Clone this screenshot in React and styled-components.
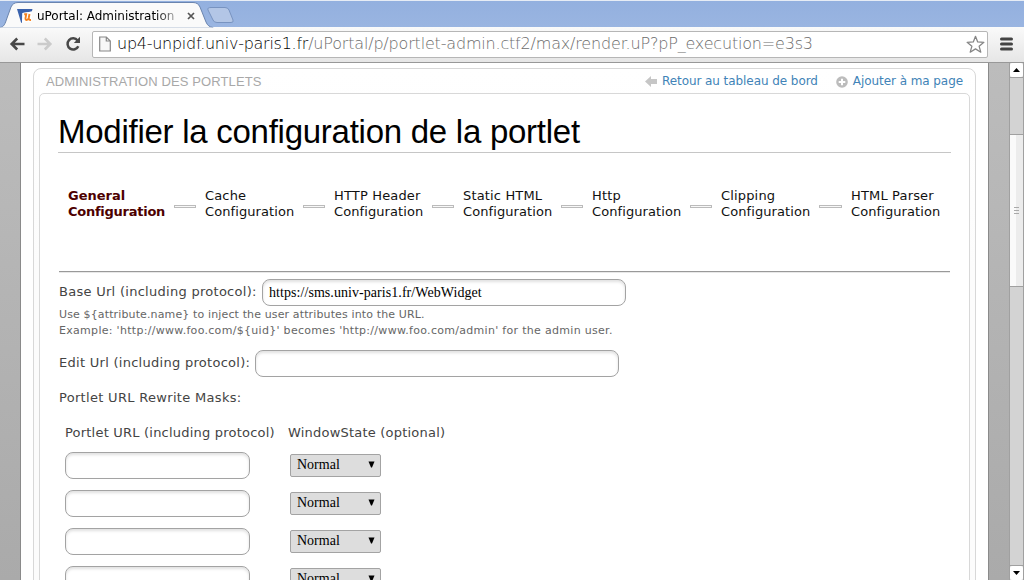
import React from "react";
import styled, { createGlobalStyle } from "styled-components";

const GlobalStyle = createGlobalStyle`
  * { box-sizing: border-box; }
  html, body { margin: 0; padding: 0; overflow: hidden; }
  body { font-family: "DejaVu Sans", sans-serif; font-size: 13px; color: #444; background: #fff; }
`;

const Window = styled.div`
  width: 1024px;
  height: 580px;
  display: flex;
  flex-direction: column;
  overflow: hidden;
`;

const TabStrip = styled.div`
  height: 27px;
  flex: none;
  position: relative;
  background: linear-gradient(#93b0df, #9ab5e1);
  border-top: 1px solid #e6ecf5;
`;

const TabShapes = styled.svg`
  position: absolute;
  left: 0;
  top: -1px;
`;

const TabContent = styled.div`
  position: relative;
  display: flex;
  align-items: center;
  height: 28px;
  padding: 1px 0 0 17px;
  width: 200px;
`;

const TabTitle = styled.span`
  width: 139px;
  margin-left: 4px;
  font-size: 12px;
  line-height: 16px;
  letter-spacing: -0.02px;
  white-space: nowrap;
  overflow: hidden;
  background: linear-gradient(to right, #000 118px, #00000055 138px);
  background-clip: text;
  -webkit-background-clip: text;
  color: transparent;
`;

const CloseIcon = styled.svg`
  margin-left: 11px;
`;

const Toolbar = styled.div`
  height: 36px;
  flex: none;
  display: flex;
  align-items: center;
  padding: 0 9px 1px 9px;
  background: linear-gradient(#fafafa, #e6e6e6);
  border-bottom: 1px solid #989898;
`;

const NavButtons = styled.div`
  display: flex;
  width: 83px;
  gap: 12px;
`;

const AddressBar = styled.div`
  width: 896px;
  height: 27px;
  display: flex;
  align-items: center;
  padding: 0 2px 0 6px;
  background: #fff;
  border: 1px solid #b6b6b6;
  border-radius: 2px;
`;

const Url = styled.span`
  flex: 1;
  margin-left: 6px;
  font-family: "DejaVu Sans", sans-serif;
  font-weight: 200;
  font-size: 16px;
  line-height: 22px;
  letter-spacing: -0.18px;
  white-space: nowrap;
  color: #6c6c6c;
  b { font-weight: 200; color: #000; letter-spacing: -0.26px; }
`;

const MenuIcon = styled.svg`
  margin-left: 12px;
`;

const Viewport = styled.div`
  flex: 1;
  min-height: 0;
  display: flex;
  background: linear-gradient(#bcbcbc, #aaa);
`;

const Page = styled.div`
  width: 969px;
  margin-left: 20px;
  margin-right: 20px;
  flex: none;
  padding: 5px 12px 0;
  background: #fff;
  border: solid #8a8a8a;
  border-width: 0 1px;
`;

const Portlet = styled.section`
  height: 600px;
  padding: 0 5px;
  border: 1px solid #d8d8d8;
  border-radius: 8px;
  background: linear-gradient(#fff, #fcfcfc 200px);
`;

const PortletHeader = styled.header`
  height: 24px;
  display: flex;
  align-items: center;
  padding: 0 7px 0 7px;
`;

const PortletTitle = styled.div`
  flex: 1;
  font-family: "Liberation Sans", sans-serif;
  font-size: 13px;
  letter-spacing: 0.11px;
  color: #a8a8a8;
  white-space: nowrap;
`;

const HeaderLink = styled.a`
  display: flex;
  align-items: center;
  margin-left: 18px;
  gap: 4px;
  font-size: 12px;
  line-height: 16px;
  letter-spacing: -0.07px;
  color: #4183b7;
  white-space: nowrap;
`;

const Content = styled.div`
  height: 600px;
  padding: 0 18px;
  background: #fff;
  border: 1px solid #d8d8d8;
  border-radius: 5px;
`;

const Heading = styled.h1`
  margin: 0;
  height: 59px;
  padding-top: 18px;
  border-bottom: 1px solid #c6c6c6;
  font-family: "Liberation Sans", sans-serif;
  font-size: 33px;
  line-height: 40px;
  letter-spacing: -0.26px;
  font-weight: 400;
  color: #000;
  white-space: nowrap;
`;

const Steps = styled.ol`
  margin: 0;
  padding: 35px 0 0 10px;
  height: 118px;
  display: flex;
  list-style: none;
`;

const Step = styled.li`
  width: ${(p) => p.$width}px;
  flex: none;
  display: flex;
  justify-content: space-between;
  line-height: 16px;
  letter-spacing: ${(p) => (p.$active ? -0.26 : 0.09)}px;
  color: ${(p) => (p.$active ? "#4d0000" : "#111")};
  font-weight: ${(p) => (p.$active ? 700 : 400)};
  white-space: nowrap;
`;

const StepName = styled.span`
  letter-spacing: ${(p) => (p.$active ? 0 : 0.16)}px;
`;

const Dash = styled.i`
  width: ${(p) => p.$width}px;
  height: 3px;
  margin: 17px 9px 0 0;
  border: 1px solid #bbb;
  background: #f8f8f8;
`;

const Form = styled.form`
  margin: 0 1px;
  border-top: 1px solid #999;
  box-shadow: inset 0 1px #e8e8e8;
  padding-top: 7px;
  letter-spacing: 0.28px;
`;

const Field = styled.label`
  display: flex;
  align-items: center;
  gap: 5px;
  height: 27px;
  white-space: nowrap;
`;

const FieldName = styled.span`
  width: ${(p) => p.$width}px;
  flex: none;
  padding-bottom: 2px;
`;

const TextInput = styled.input`
  width: ${(p) => p.$width}px;
  height: 27px;
  margin: 0;
  padding: 0 6px;
  border: 1px solid #a3a3a3;
  border-radius: 8px;
  background: #fff;
  box-shadow: inset 0 2px 3px #0000001f;
  font-family: "Liberation Serif", serif;
  font-size: 14px;
  letter-spacing: 0.06px;
  color: #000;
  outline: none;
`;

const Hint = styled.p`
  margin: ${(p) => p.$margin};
  font-size: 11px;
  line-height: 16px;
  letter-spacing: ${(p) => p.$spacing}px;
  color: #666;
  white-space: nowrap;
`;

const Label = styled.div`
  line-height: 16px;
  margin-top: 13px;
  letter-spacing: 0.31px;
  white-space: nowrap;
`;

const MaskTable = styled.div`
  display: grid;
  grid-template-columns: 225px 200px;
  grid-template-rows: 27px;
  grid-auto-rows: 38px;
  padding: 19px 0 0 6px;
`;

const ColumnTitle = styled.div`
  line-height: 16px;
  letter-spacing: 0.21px;
  white-space: nowrap;
  margin-left: ${(p) => p.$shift || 0}px;
`;

const SelectBox = styled.div`
  width: 91px;
  height: 23px;
  margin-top: 2px;
  padding: 0 5px 2px 6px;
  display: flex;
  align-items: center;
  justify-content: space-between;
  border: 1px solid #a3a3a3;
  border-radius: 2px;
  background: #ddd;
  font-family: "Liberation Serif", serif;
  font-size: 14px;
  letter-spacing: 0;
  color: #000;
`;

const Scrollbar = styled.div`
  width: 15px;
  flex: none;
  display: flex;
  flex-direction: column;
  background: #d3d3d3;
  border: solid #a0a0a0;
  border-width: 0 1px;
`;

const ScrollButton = styled.div`
  height: 14px;
  display: flex;
  align-items: center;
  justify-content: center;
  background: #fff;
  border-radius: 2px;
`;

const Track = styled.div`
  height: ${(p) => p.$height}px;
  border: solid #a0a0a0;
  border-width: 1px 0;
`;

const Thumb = styled.div`
  height: 151px;
  display: flex;
  flex-direction: column;
  align-items: center;
  justify-content: center;
  gap: 2px;
  background: linear-gradient(to right, #fafafa 50%, #ececec 50%);
`;

const Grip = styled.i`
  width: 5px;
  height: 1px;
  background: #aaa;
`;

const Favicon = () => (
  <svg width="16" height="16" viewBox="0 0 16 16">
    <path d="M0 1h15.500L14.800 3.500 5.500 5 5 14.500 4.200 15z" fill="#3a62ad" />
    <path d="M5.500 5 15.500 3.500 14.500 14 5 14.500z" fill="#fff" />
    <path d="M7.200 6.200H9.200L8.500 10.200Q8.300 12 9.700 12 11.200 12 11.700 10L12.500 6M11.800 9.500Q11.400 12.200 14 12" fill="none" stroke="#f5821f" strokeWidth="1.900" />
  </svg>
);

const BackIcon = ({ color }) => (
  <svg width="16" height="16" viewBox="0 0 16 16" fill="none" stroke={color} strokeWidth="2.600">
    <path d="M15.500 8H3M8.200 2.500 2.700 8 8.200 13.500" />
  </svg>
);

const ForwardIcon = ({ color }) => (
  <svg width="16" height="16" viewBox="0 0 16 16" fill="none" stroke={color} strokeWidth="2.600">
    <path d="M.5 8H13M7.800 2.500 13.300 8 7.800 13.500" />
  </svg>
);

const ReloadIcon = () => (
  <svg width="16" height="16" viewBox="0 0 16 16">
    <path d="M12.600 4.500A5.600 5.600 0 1 0 13.300 10.200" fill="none" stroke="#484848" strokeWidth="2.500" />
    <path d="M15 .8V7H8.800z" fill="#484848" />
  </svg>
);

const PageIcon = () => (
  <svg width="12" height="16" viewBox="0 0 12 16">
    <path d="M.7 1h6.600l4 4v10H.7zM7.300 1v4h4" fill="#f7f7f7" stroke="#888" strokeWidth="1.200" />
  </svg>
);

const StarIcon = () => (
  <svg width="19" height="19" viewBox="0 0 19 19">
    <path d="M9.500 1.300 11.700 6.900 17.900 7.300 13.100 11.200 14.800 17.200 9.500 13.900 4.200 17.200 5.900 11.200 1.100 7.300 7.300 6.900z" fill="#fff" stroke="#858585" strokeWidth="1.250" strokeLinejoin="round" />
  </svg>
);

const Arrow = ({ d }) => (
  <svg width="7" height="4" viewBox="0 0 7 4">
    <path d={d} fill="#000" />
  </svg>
);

const steps = [
  ["General", 137],
  ["Cache", 129],
  ["HTTP Header", 129],
  ["Static HTML", 129],
  ["Http", 129],
  ["Clipping", 130],
  ["HTML Parser", 90],
];

export default function App() {
  return (
    <Window>
      <GlobalStyle />
      <TabStrip>
        <TabShapes width="260" height="28" viewBox="0 0 260 28">
          <path d="M0 27.500C4 27 5 24 7 18L11 7Q13 2.500 18 2.500H193Q198 2.500 200 7L206 22Q208 27 213 27.500V28H0z" fill="#fafafa" stroke="#6a84ae" />
          <path d="M0 28h1024" stroke="#fafafa" />
          <path d="M211 7.500H225Q228 7.500 229 10L233 20Q234 22.500 231 22.500H217Q214 22.500 213 20L208 10Q207 7.500 211 7.500z" fill="#b3c6e6" stroke="#7893c0" />
        </TabShapes>
        <TabContent>
          <Favicon />
          <TabTitle>uPortal: Administration</TabTitle>
          <CloseIcon width="8" height="8" viewBox="0 0 8 8">
            <path d="M1 1l6 6M7 1 1 7" stroke="#555" strokeWidth="1.700" />
          </CloseIcon>
        </TabContent>
      </TabStrip>
      <Toolbar>
        <NavButtons>
          <BackIcon color="#484848" />
          <ForwardIcon color="#cbcbcb" />
          <ReloadIcon />
        </NavButtons>
        <AddressBar>
          <PageIcon />
          <Url><b>up4-unpidf.univ-paris1.fr</b>/uPortal/p/portlet-admin.ctf2/max/render.uP?pP_execution=e3s3</Url>
          <StarIcon />
        </AddressBar>
        <MenuIcon width="13" height="14" viewBox="0 0 13 14">
          <path d="M1.500 2h10M1.500 7h10M1.500 12h10" stroke="#444" strokeWidth="3" strokeLinecap="round" />
        </MenuIcon>
      </Toolbar>
      <Viewport>
        <Page>
          <Portlet>
            <PortletHeader>
              <PortletTitle>ADMINISTRATION DES PORTLETS</PortletTitle>
              <HeaderLink>
                <svg width="13" height="12" viewBox="0 0 13 12">
                  <path d="M0 6.500 6 1V4h6v5H6v3z" fill="#c6c6c6" />
                </svg>
                Retour au tableau de bord
              </HeaderLink>
              <HeaderLink>
                <svg width="13" height="13" viewBox="0 0 13 13">
                  <circle cx="6" cy="7" r="5.800" fill="#bcbcbc" />
                  <path d="M6 3.700v6.600M2.700 7h6.600" stroke="#fff" strokeWidth="2" />
                </svg>
                Ajouter à ma page
              </HeaderLink>
            </PortletHeader>
            <Content>
              <Heading>Modifier la configuration de la portlet</Heading>
              <Steps>
                {steps.map(([name, width], i) => (
                  <Step key={name} $width={width} $active={i === 0}>
                    <span><StepName $active={i === 0}>{name}</StepName><br />Configuration</span>
                    {i < steps.length - 1 && <Dash $width={name === "Clipping" ? 23 : 22} />}
                  </Step>
                ))}
              </Steps>
              <Form>
                <Field>
                  <FieldName $width={198}>Base Url (including protocol):</FieldName>
                  <TextInput $width={364} defaultValue="https://sms.univ-paris1.fr/WebWidget" />
                </Field>
                <Hint $margin="1px 0 0" $spacing={0.13}>
                  Use ${"{attribute.name}"} to inject the user attributes into the URL.
                </Hint>
                <Hint $margin="0 0 11px" $spacing={0.3}>
                  Example: 'http://www.foo.com/${"{uid}"}' becomes 'http://www.foo.com/admin' for the admin user.
                </Hint>
                <Field>
                  <FieldName $width={191}>Edit Url (including protocol):</FieldName>
                  <TextInput $width={364} />
                </Field>
                <Label>Portlet URL Rewrite Masks:</Label>
                <MaskTable>
                  <ColumnTitle>Portlet URL (including protocol)</ColumnTitle>
                  <ColumnTitle $shift={-2}>WindowState (optional)</ColumnTitle>
                  {[0, 1, 2, 3].map((row) => (
                    <React.Fragment key={row}>
                      <TextInput $width={185} />
                      <SelectBox>
                        Normal
                        <svg width="7" height="7" viewBox="0 0 7 7">
                          <path d="M.5 .5h6L4 6.500H3z" fill="#000" />
                        </svg>
                      </SelectBox>
                    </React.Fragment>
                  ))}
                </MaskTable>
              </Form>
            </Content>
          </Portlet>
        </Page>
        <Scrollbar>
          <ScrollButton><Arrow d="M0 4 3.500 0 7 4z" /></ScrollButton>
          <Track $height={58} />
          <Thumb><Grip /><Grip /><Grip /></Thumb>
          <Track $height={280} />
          <ScrollButton><Arrow d="M0 0h7L3.500 4z" /></ScrollButton>
        </Scrollbar>
      </Viewport>
    </Window>
  );
}
